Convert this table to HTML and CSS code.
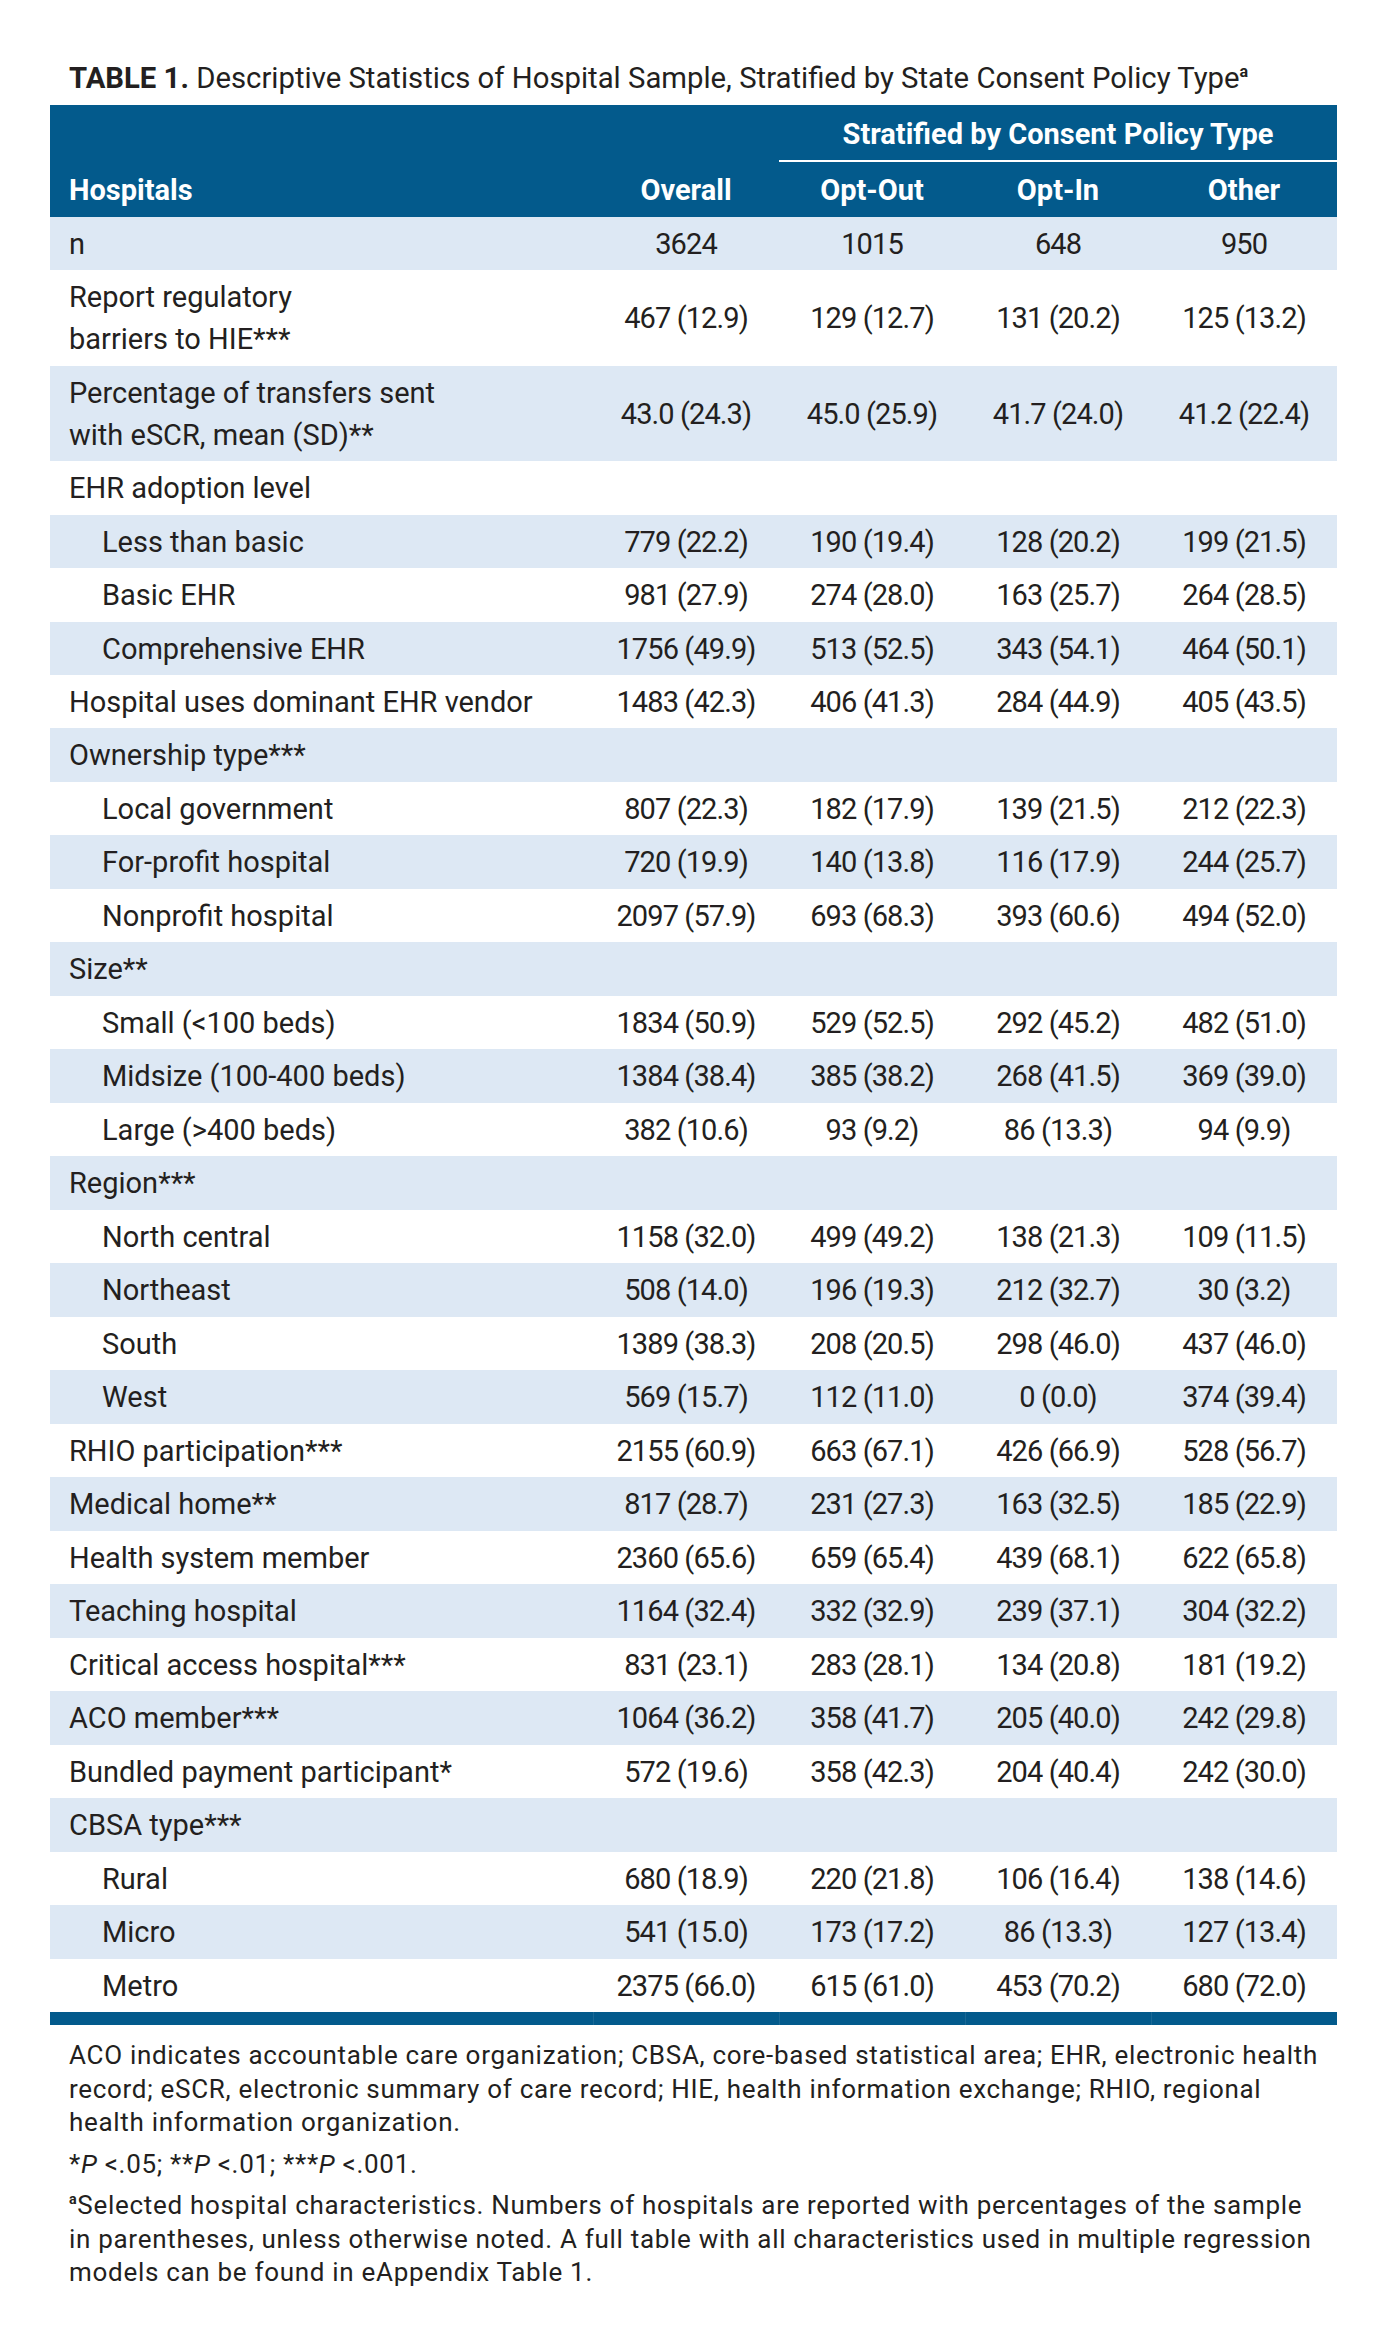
FILE: index.html
```html
<!DOCTYPE html>
<html lang="en">
<head>
<meta charset="utf-8">
<title>Table 1. Descriptive Statistics of Hospital Sample</title>
<link rel="stylesheet" href="styles.css">
</head>
<body>
<main class="page">
  <h1 class="caption"><b>TABLE 1.</b> Descriptive Statistics of Hospital Sample, Stratified by State Consent Policy Type<sup>a</sup></h1>
  <table class="stats">
    <colgroup>
      <col class="c-label"><col class="c-num"><col class="c-num"><col class="c-num"><col class="c-num">
    </colgroup>
    <thead>
      <tr class="group-row">
        <th colspan="2"></th>
        <th colspan="3" class="group">Stratified by Consent Policy Type</th>
      </tr>
      <tr class="col-row">
        <th class="label">Hospitals</th>
        <th>Overall</th>
        <th>Opt-Out</th>
        <th>Opt-In</th>
        <th>Other</th>
      </tr>
    </thead>
    <tbody>
      <tr><td class="label">n</td><td>3624</td><td>1015</td><td>648</td><td>950</td></tr>
      <tr><td class="label">Report regulatory<br>barriers to HIE***</td><td>467 (12.9)</td><td>129 (12.7)</td><td>131 (20.2)</td><td>125 (13.2)</td></tr>
      <tr><td class="label">Percentage of transfers sent<br>with eSCR, mean (SD)**</td><td>43.0 (24.3)</td><td>45.0 (25.9)</td><td>41.7 (24.0)</td><td>41.2 (22.4)</td></tr>
      <tr><td class="label">EHR adoption level</td><td></td><td></td><td></td><td></td></tr>
      <tr><td class="label sub">Less than basic</td><td>779 (22.2)</td><td>190 (19.4)</td><td>128 (20.2)</td><td>199 (21.5)</td></tr>
      <tr><td class="label sub">Basic EHR</td><td>981 (27.9)</td><td>274 (28.0)</td><td>163 (25.7)</td><td>264 (28.5)</td></tr>
      <tr><td class="label sub">Comprehensive EHR</td><td>1756 (49.9)</td><td>513 (52.5)</td><td>343 (54.1)</td><td>464 (50.1)</td></tr>
      <tr><td class="label">Hospital uses dominant EHR vendor</td><td>1483 (42.3)</td><td>406 (41.3)</td><td>284 (44.9)</td><td>405 (43.5)</td></tr>
      <tr><td class="label">Ownership type***</td><td></td><td></td><td></td><td></td></tr>
      <tr><td class="label sub">Local government</td><td>807 (22.3)</td><td>182 (17.9)</td><td>139 (21.5)</td><td>212 (22.3)</td></tr>
      <tr><td class="label sub">For-profit hospital</td><td>720 (19.9)</td><td>140 (13.8)</td><td>116 (17.9)</td><td>244 (25.7)</td></tr>
      <tr><td class="label sub">Nonprofit hospital</td><td>2097 (57.9)</td><td>693 (68.3)</td><td>393 (60.6)</td><td>494 (52.0)</td></tr>
      <tr><td class="label">Size**</td><td></td><td></td><td></td><td></td></tr>
      <tr><td class="label sub">Small (&lt;100 beds)</td><td>1834 (50.9)</td><td>529 (52.5)</td><td>292 (45.2)</td><td>482 (51.0)</td></tr>
      <tr><td class="label sub">Midsize (100-400 beds)</td><td>1384 (38.4)</td><td>385 (38.2)</td><td>268 (41.5)</td><td>369 (39.0)</td></tr>
      <tr><td class="label sub">Large (&gt;400 beds)</td><td>382 (10.6)</td><td>93 (9.2)</td><td>86 (13.3)</td><td>94 (9.9)</td></tr>
      <tr><td class="label">Region***</td><td></td><td></td><td></td><td></td></tr>
      <tr><td class="label sub">North central</td><td>1158 (32.0)</td><td>499 (49.2)</td><td>138 (21.3)</td><td>109 (11.5)</td></tr>
      <tr><td class="label sub">Northeast</td><td>508 (14.0)</td><td>196 (19.3)</td><td>212 (32.7)</td><td>30 (3.2)</td></tr>
      <tr><td class="label sub">South</td><td>1389 (38.3)</td><td>208 (20.5)</td><td>298 (46.0)</td><td>437 (46.0)</td></tr>
      <tr><td class="label sub">West</td><td>569 (15.7)</td><td>112 (11.0)</td><td>0 (0.0)</td><td>374 (39.4)</td></tr>
      <tr><td class="label">RHIO participation***</td><td>2155 (60.9)</td><td>663 (67.1)</td><td>426 (66.9)</td><td>528 (56.7)</td></tr>
      <tr><td class="label">Medical home**</td><td>817 (28.7)</td><td>231 (27.3)</td><td>163 (32.5)</td><td>185 (22.9)</td></tr>
      <tr><td class="label">Health system member</td><td>2360 (65.6)</td><td>659 (65.4)</td><td>439 (68.1)</td><td>622 (65.8)</td></tr>
      <tr><td class="label">Teaching hospital</td><td>1164 (32.4)</td><td>332 (32.9)</td><td>239 (37.1)</td><td>304 (32.2)</td></tr>
      <tr><td class="label">Critical access hospital***</td><td>831 (23.1)</td><td>283 (28.1)</td><td>134 (20.8)</td><td>181 (19.2)</td></tr>
      <tr><td class="label">ACO member***</td><td>1064 (36.2)</td><td>358 (41.7)</td><td>205 (40.0)</td><td>242 (29.8)</td></tr>
      <tr><td class="label">Bundled payment participant*</td><td>572 (19.6)</td><td>358 (42.3)</td><td>204 (40.4)</td><td>242 (30.0)</td></tr>
      <tr><td class="label">CBSA type***</td><td></td><td></td><td></td><td></td></tr>
      <tr><td class="label sub">Rural</td><td>680 (18.9)</td><td>220 (21.8)</td><td>106 (16.4)</td><td>138 (14.6)</td></tr>
      <tr><td class="label sub">Micro</td><td>541 (15.0)</td><td>173 (17.2)</td><td>86 (13.3)</td><td>127 (13.4)</td></tr>
      <tr><td class="label sub">Metro</td><td>2375 (66.0)</td><td>615 (61.0)</td><td>453 (70.2)</td><td>680 (72.0)</td></tr>
    </tbody>
    <tfoot>
      <tr class="end"><td></td><td></td><td></td><td></td><td></td></tr>
    </tfoot>
  </table>
  <div class="notes">
    <p>ACO indicates accountable care organization; CBSA, core-based statistical area; EHR, electronic health record; eSCR, electronic summary of care record; HIE, health information exchange; RHIO, regional health information organization.</p>
    <p>*<i>P</i> &lt;.05; **<i>P</i> &lt;.01; ***<i>P</i> &lt;.001.</p>
    <p><sup>a</sup>Selected hospital characteristics. Numbers of hospitals are reported with percentages of the sample in parentheses, unless otherwise noted. A full table with all characteristics used in multiple regression models can be found in eAppendix Table 1.</p>
  </div>
</main>
</body>
</html>
```

FILE: styles.css
```css
html, body {
  margin: 0;
  padding: 0;
  background: #ffffff;
}

body {
  font-family: Roboto, "Liberation Sans", Arial, sans-serif;
  color: #231f20;
}

.page {
  width: 1286px;
  padding: 61px 0 0 50px;
}

.caption {
  margin: 0 0 10px 19px;
  font-size: 29.3px;
  line-height: 34px;
  font-weight: 400;
  white-space: nowrap;
}

.caption b {
  font-weight: 700;
}

.caption sup,
.notes sup {
  font-size: 0.55em;
  line-height: 0;
  vertical-align: 0.7em;
  font-weight: 700;
}

.stats {
  width: 1286px;
  table-layout: fixed;
  border-collapse: separate;
  border-spacing: 0;
  font-size: 29px;
}

.c-label { width: 543px; }
.c-num { width: 186px; }

.stats thead th {
  background: #035a8c;
  color: #ffffff;
  font-weight: 700;
  line-height: 34px;
  text-align: center;
  white-space: nowrap;
}

.group-row th {
  padding: 12px 0 9px;
}

.group-row th.group {
  border-bottom: 2px solid #ffffff;
}

.col-row th {
  padding: 11px 0 10px;
}

.stats th.label,
.stats td.label {
  text-align: left;
  padding-left: 19px;
}

.stats tbody td {
  padding: 7px 0 4.7px;
  line-height: 41.8px;
  text-align: center;
  white-space: nowrap;
  letter-spacing: -0.9px;
}

.stats tbody td.label {
  letter-spacing: 0;
}

.stats tbody td.sub {
  padding-left: 52px;
}

.stats tbody tr:nth-child(odd) td {
  background: #dde8f4;
}

.end td {
  height: 13px;
  padding: 0;
  background: #035a8c;
}

.end td + td {
  border-left: 1px solid #1a6895;
}

.notes {
  width: 1255px;
  margin: 14px 0 0;
  padding: 0 0 0 19px;
  font-size: 26px;
  line-height: 33.5px;
  letter-spacing: 0.7px;
}

.notes p {
  margin: 0 0 8px;
}

.notes i {
  font-style: italic;
}
```
